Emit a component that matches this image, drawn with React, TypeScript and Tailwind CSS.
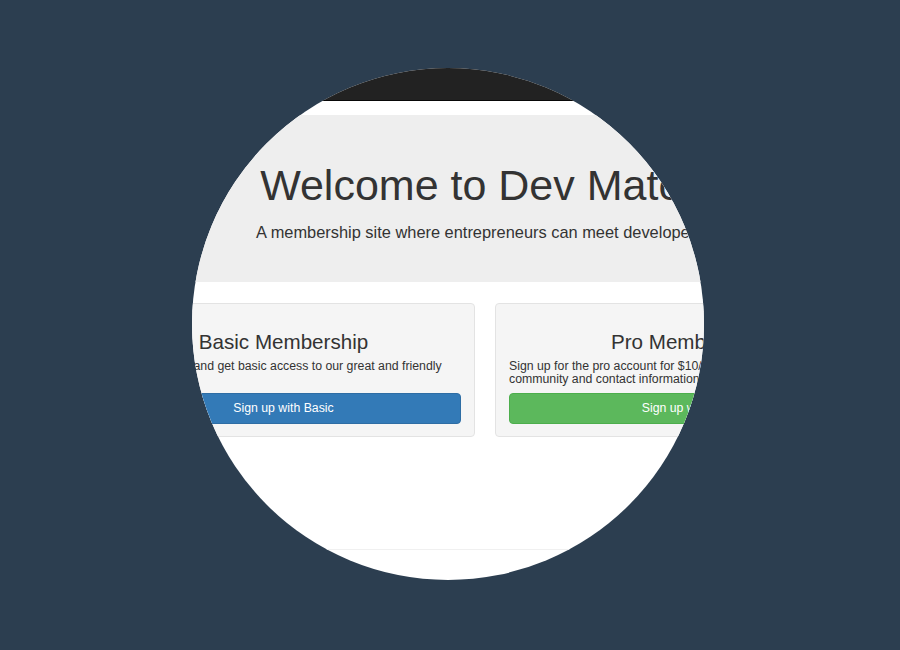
export default function App() {
  return (
    <div className="w-[900px] h-[650px] bg-[#2c3e50] pl-[192px] pt-[68px]">
      <div className="w-[512px] h-[512px] rounded-full overflow-hidden bg-white">
        <div className="w-[900px] ml-[-160px] text-[#333] font-['Liberation_Sans',Arial,sans-serif]">
          <div className="h-[33px] bg-[#222] border-b border-[#080808]" />

          <div className="mt-[14px] bg-[#eee] pt-[47px] pb-[39px] text-center">
            <h1 className="text-[43px] leading-[47px]">Welcome to Dev Match</h1>
            <p className="mt-[12px] text-[16.4px] leading-[22px]">
              A membership site where entrepreneurs can meet developers.
            </p>
          </div>

          <div className="w-[786px] ml-[60px]">
            <div className="mt-[21px] flex gap-[20px]">
              <div className="w-[383px] border border-[#e3e3e3] bg-[#f5f5f5] rounded px-[13px] pt-[26px] pb-[12px]">
                <h3 className="text-[20.6px] leading-[23px] text-center">Basic Membership</h3>
                <p className="mt-[7px] text-[12.3px] leading-[12.5px]">
                  Sign up for free and get basic access to our great and friendly community.
                </p>
                <button className="mt-[7.5px] w-full h-[31px] rounded bg-[#337ab7] border border-[#2e6da4] text-white text-[12.3px]">
                  Sign up with Basic
                </button>
              </div>
              <div className="w-[383px] border border-[#e3e3e3] bg-[#f5f5f5] rounded px-[13px] pt-[26px] pb-[12px]">
                <h3 className="text-[20.6px] leading-[23px] text-center">Pro Membership</h3>
                <p className="mt-[7px] text-[12.3px] leading-[12.5px]">
                  Sign up for the pro account for $10/month and get access to our community and contact information of developers.
                </p>
                <button className="mt-[7.5px] w-full h-[31px] rounded bg-[#5cb85c] border border-[#4cae4c] text-white text-[12.3px]">
                  Sign up with Pro
                </button>
              </div>
            </div>
            <div className="mt-[112px] border-t border-[#f0f0f0]" />
          </div>
        </div>
      </div>
    </div>
  );
}
